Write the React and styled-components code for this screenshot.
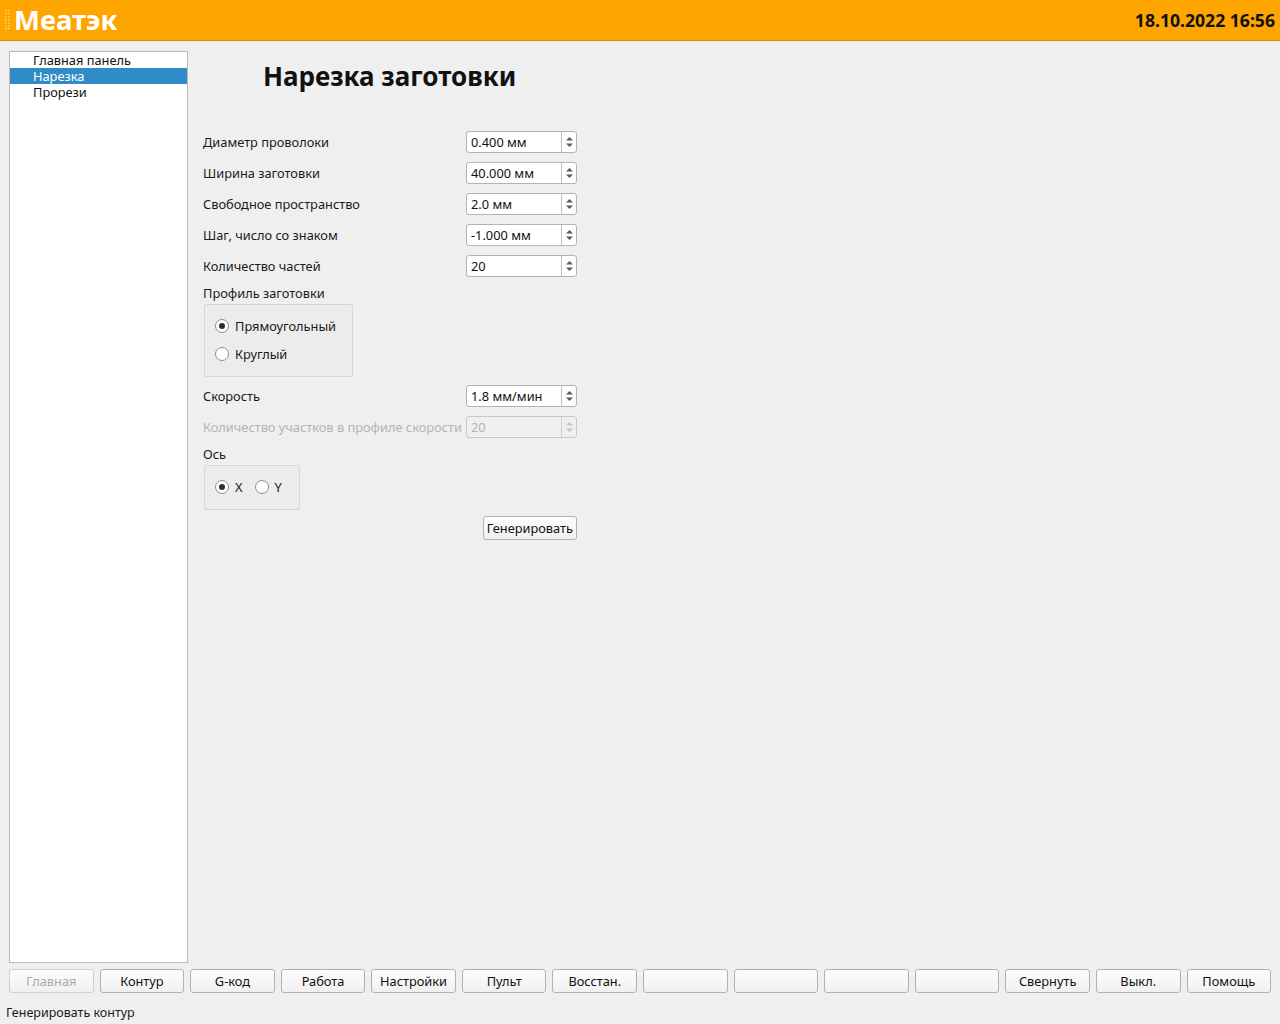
import React from 'react';
import styled, { createGlobalStyle } from 'styled-components';

const GlobalStyle = createGlobalStyle`
  html, body {
    margin: 0;
    padding: 0;
    background: #efefef;
  }
  body {
    font-family: 'Noto Sans', 'DejaVu Sans', sans-serif;
    font-size: 12.8px;
    color: #1a1a1a;
  }
`;

const Page = styled.div`
  width: 1280px;
  height: 1024px;
  display: flex;
  flex-direction: column;
  overflow: hidden;
`;

const Header = styled.div`
  height: 40px;
  flex-shrink: 0;
  background: #ffa500;
  border-bottom: 1px solid #d98c00;
  display: flex;
  align-items: center;
  justify-content: space-between;
  padding: 0 5px;
`;

const Brand = styled.div`
  display: flex;
  align-items: center;
  gap: 3px;
`;

const Logo = styled.span`
  color: #fff;
  font-weight: 700;
  font-size: 27.5px;
  line-height: 40px;
`;

const Clock = styled.span`
  font-weight: 700;
  font-size: 17.6px;
  color: #111;
`;

const Body = styled.div`
  height: 922px;
  flex-shrink: 0;
  box-sizing: border-box;
  display: flex;
  gap: 15px;
  padding: 10px 0 0 9px;
`;

const Sidebar = styled.ul`
  width: 177px;
  height: 910px;
  margin: 0;
  padding: 0;
  list-style: none;
  background: #fff;
  border: 1px solid #b9b9b9;
`;

const NavItem = styled.li`
  height: 16px;
  line-height: 16px;
  padding-left: 23px;
  background: ${p => (p.$active ? '#308cc6' : 'transparent')};
  color: ${p => (p.$active ? '#fff' : '#111')};
`;

const Content = styled.div`
  display: flex;
  flex-direction: column;
  width: 374px;
`;

const Title = styled.h1`
  margin: 9px 0 0 60px;
  font-size: 26px;
  line-height: 32px;
  font-weight: 700;
  color: #111;
`;

const Form = styled.div`
  display: flex;
  flex-direction: column;
  margin-top: 39px;
`;

const Row = styled.div`
  display: flex;
  align-items: center;
  justify-content: space-between;
  height: 22px;
  margin-bottom: 9px;
  white-space: nowrap;
  color: ${p => (p.$disabled ? '#b4b4b4' : '#1a1a1a')};
`;

const SectionLabel = styled.div`
  height: 16px;
  line-height: 16px;
  margin: -1px 0 3px;
`;

const Spin = styled.div`
  width: 109px;
  height: 20px;
  flex-shrink: 0;
  border: 1px solid ${p => (p.$disabled ? '#c8c8c8' : '#b3b3b3')};
  border-radius: 3px;
  background: ${p => (p.$disabled ? '#efefef' : '#fff')};
  display: flex;
  color: ${p => (p.$disabled ? '#b4b4b4' : '#111')};
`;

const SpinValue = styled.div`
  flex: 1;
  padding-left: 4px;
  line-height: 20px;
`;

const SpinArrows = styled.div`
  width: 14px;
  border-left: 1px solid ${p => (p.$disabled ? '#d0d0d0' : '#c0c0c0')};
  display: flex;
  align-items: center;
  justify-content: center;
`;

const Group = styled.div`
  width: ${p => p.$w}px;
  height: ${p => p.$h}px;
  box-sizing: border-box;
  margin-left: 1px;
  border: 1px solid #d6d6d6;
  border-radius: 2px;
  background: #ececec;
  display: flex;
  flex-direction: ${p => (p.$row ? 'row' : 'column')};
  gap: 12px;
  padding: 13px 10px;
`;

const RadioLabel = styled.div`
  display: flex;
  align-items: center;
  gap: 6px;
  height: 16px;
`;

const RadioDot = styled.span`
  width: 12px;
  height: 12px;
  border-radius: 50%;
  border: 1px solid #8f8f8f;
  background: #fff;
  display: inline-flex;
  align-items: center;
  justify-content: center;
  &::after {
    content: '';
    width: 6px;
    height: 6px;
    border-radius: 50%;
    background: ${p => (p.$on ? '#2e2e2e' : 'transparent')};
  }
`;

const ActionRow = styled.div`
  display: flex;
  justify-content: flex-end;
  margin-top: 6px;
`;

const Button = styled.button`
  font-family: inherit;
  font-size: 12.8px;
  height: 24px;
  padding: 0 3px;
  border: 1px solid ${p => (p.disabled ? '#cfcfcf' : '#b2b2b2')};
  border-radius: 3px;
  background: linear-gradient(#fdfdfd, #f0f0f0);
  color: ${p => (p.disabled ? '#ababab' : '#111')};
`;

const Footer = styled.div`
  display: flex;
  gap: 6px;
  padding: 0 9px;
  margin-top: 6px;
  & > button {
    flex: 1;
    min-width: 0;
  }
`;

const Status = styled.div`
  height: 22px;
  line-height: 22px;
  padding-left: 6px;
  margin-top: 9px;
  font-size: 12.5px;
`;

function Grip() {
  const dots = [];
  for (let r = 0; r < 7; r++) {
    for (let c = 0; c < 2; c++) {
      dots.push(<rect key={r + '-' + c} x={c * 3} y={r * 3} width="1.5" height="1.5" fill="#ffd27a" />);
    }
  }
  return (
    <svg width="6" height="21" viewBox="0 0 6 21">
      {dots}
    </svg>
  );
}

function Arrows({ disabled }) {
  const c = disabled ? '#c4c4c4' : '#5a5a5a';
  return (
    <svg width="9" height="14" viewBox="0 0 9 14">
      <path d="M1 5.5 L4.5 2 L8 5.5 Z" fill={c} />
      <path d="M1 8.5 L4.5 12 L8 8.5 Z" fill={c} />
    </svg>
  );
}

function SpinBox({ value, disabled }) {
  return (
    <Spin $disabled={disabled}>
      <SpinValue>{value}</SpinValue>
      <SpinArrows $disabled={disabled}>
        <Arrows disabled={disabled} />
      </SpinArrows>
    </Spin>
  );
}

const fields = [
  ['Диаметр проволоки', '0.400 мм'],
  ['Ширина заготовки', '40.000 мм'],
  ['Свободное пространство', '2.0 мм'],
  ['Шаг, число со знаком', '-1.000 мм'],
  ['Количество частей', '20']
];

const footerButtons = [
  { label: 'Главная', disabled: true },
  { label: 'Контур' },
  { label: 'G-код' },
  { label: 'Работа' },
  { label: 'Настройки' },
  { label: 'Пульт' },
  { label: 'Восстан.' },
  { label: '' },
  { label: '' },
  { label: '' },
  { label: '' },
  { label: 'Свернуть' },
  { label: 'Выкл.' },
  { label: 'Помощь' }
];

export default function App() {
  return (
    <Page>
      <GlobalStyle />
      <Header>
        <Brand>
          <Grip />
          <Logo>Меатэк</Logo>
        </Brand>
        <Clock>18.10.2022 16:56</Clock>
      </Header>
      <Body>
        <Sidebar>
          <NavItem>Главная панель</NavItem>
          <NavItem $active>Нарезка</NavItem>
          <NavItem>Прорези</NavItem>
        </Sidebar>
        <Content>
          <Title>Нарезка заготовки</Title>
          <Form>
            {fields.map(([label, value]) => (
              <Row key={label}>
                <span>{label}</span>
                <SpinBox value={value} />
              </Row>
            ))}
            <SectionLabel>Профиль заготовки</SectionLabel>
            <Group $w={149} $h={73}>
              <RadioLabel>
                <RadioDot $on />
                Прямоугольный
              </RadioLabel>
              <RadioLabel>
                <RadioDot />
                Круглый
              </RadioLabel>
            </Group>
            <Row style={{ marginTop: 8 }}>
              <span>Скорость</span>
              <SpinBox value="1.8 мм/мин" />
            </Row>
            <Row $disabled>
              <span>Количество участков в профиле скорости</span>
              <SpinBox value="20" disabled />
            </Row>
            <SectionLabel>Ось</SectionLabel>
            <Group $w={96} $h={45} $row>
              <RadioLabel>
                <RadioDot $on />
                X
              </RadioLabel>
              <RadioLabel>
                <RadioDot />
                Y
              </RadioLabel>
            </Group>
            <ActionRow>
              <Button>Генерировать</Button>
            </ActionRow>
          </Form>
        </Content>
      </Body>
      <Footer>
        {footerButtons.map((b, i) => (
          <Button key={i} disabled={b.disabled}>
            {b.label}
          </Button>
        ))}
      </Footer>
      <Status>Генерировать контур</Status>
    </Page>
  );
}
